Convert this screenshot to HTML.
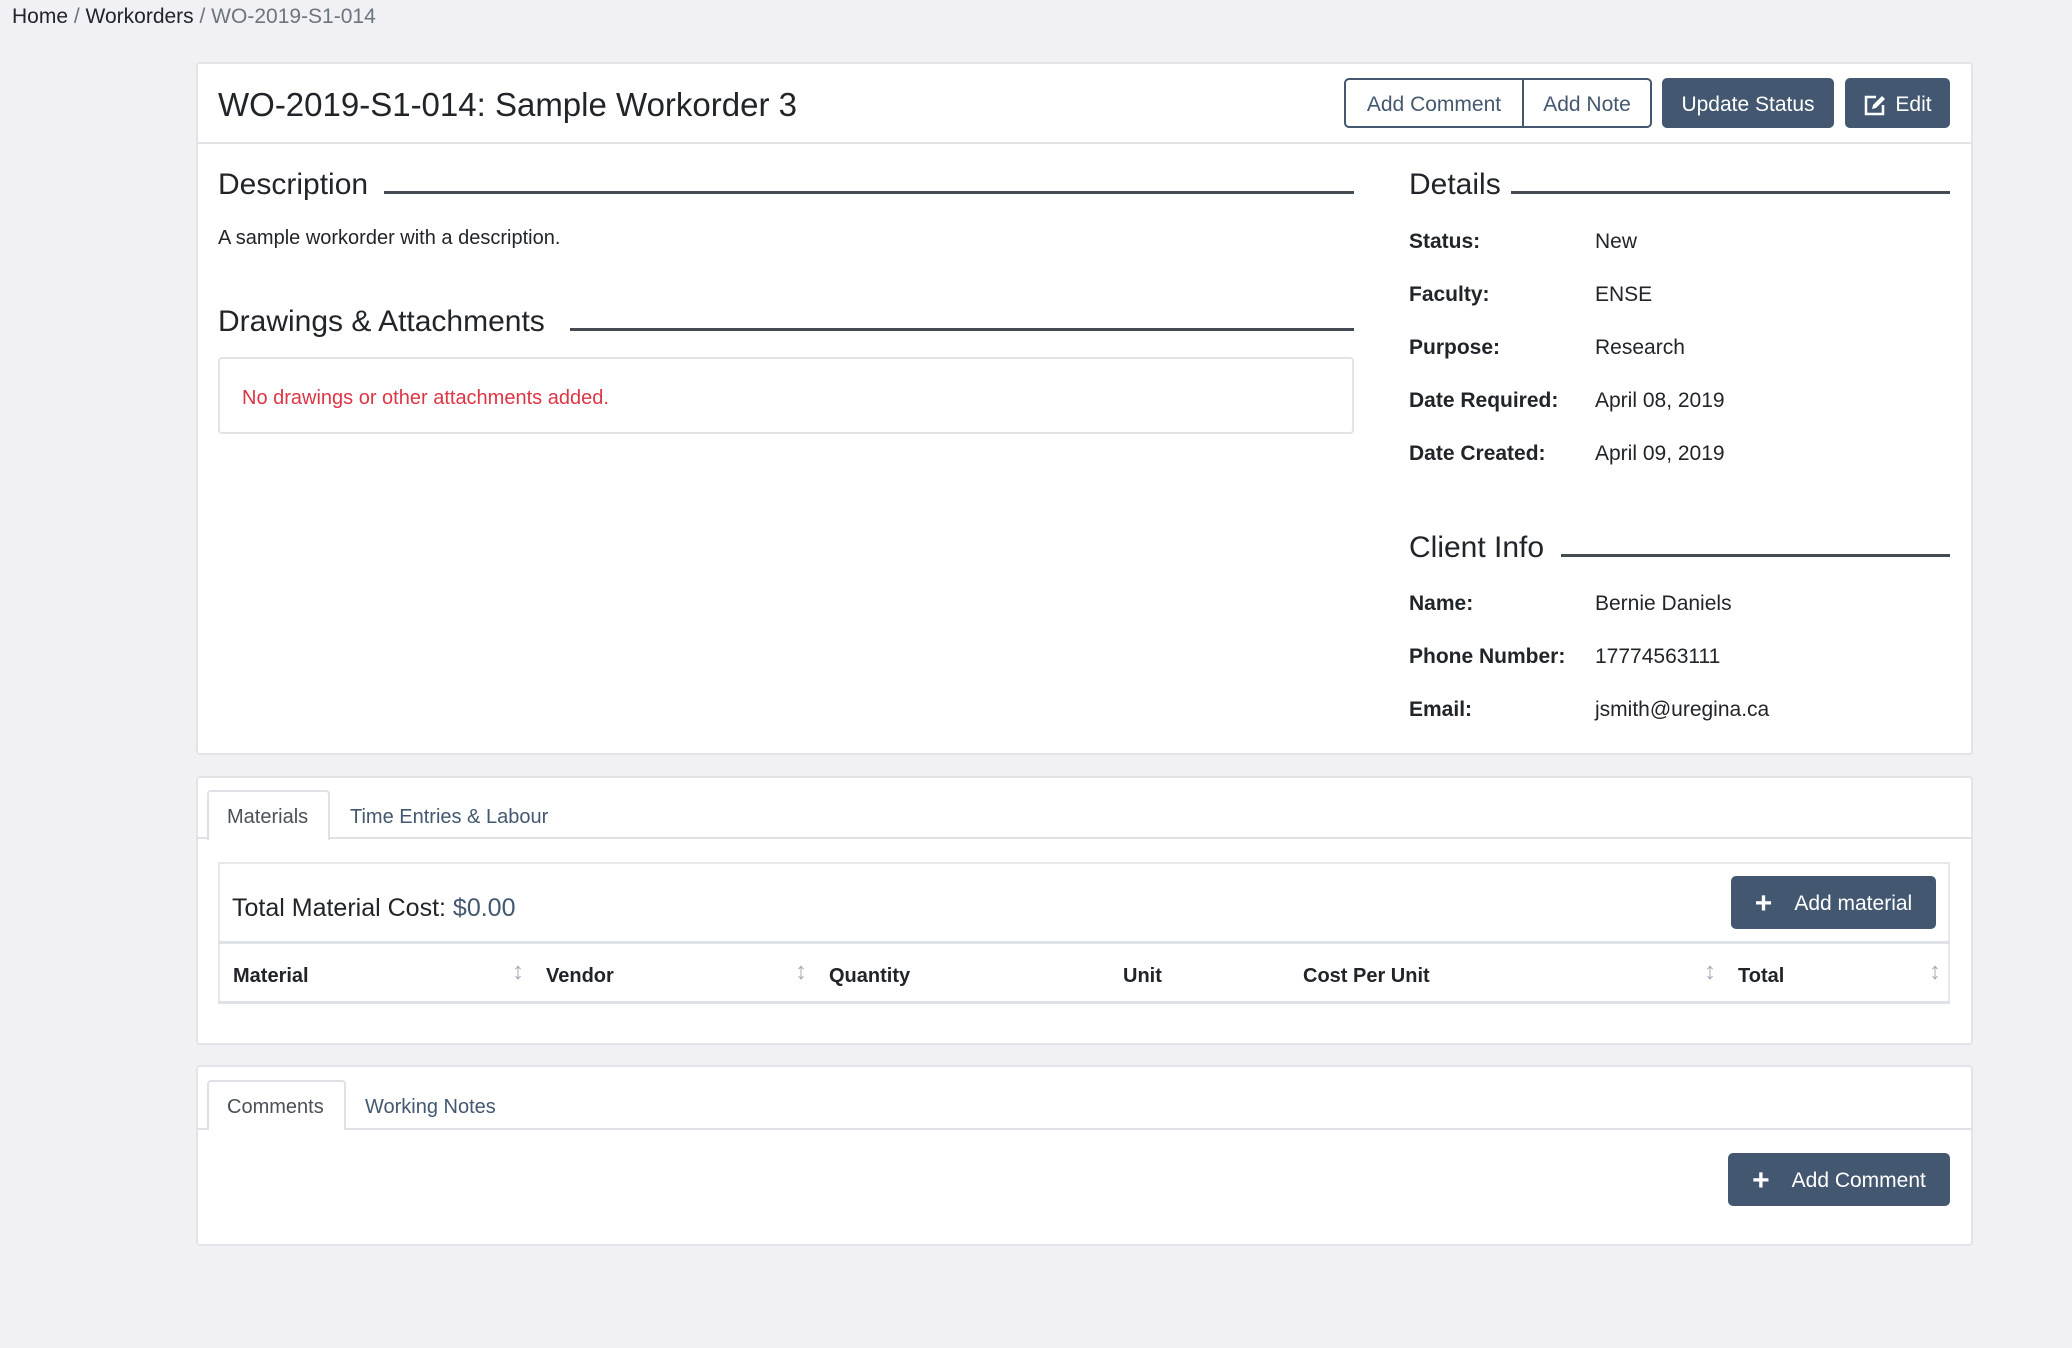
<!DOCTYPE html>
<html><head><meta charset="utf-8">
<style>
*{box-sizing:border-box;margin:0;padding:0}
body{width:2072px;height:1348px;background:#f0f0f5;font-family:"Liberation Sans",sans-serif;color:#212529;position:relative;overflow:hidden;font-size:21px}
.a{position:absolute;white-space:nowrap}
.t{transform:translateY(3px)}
.card{position:absolute;background:#fff;border:2px solid #e3e3e8;border-radius:4px}
.btn{position:absolute;background:#435870;color:#fff;border-radius:5px;font-size:21px;display:flex;align-items:center;justify-content:center;padding-top:3px}
.h{font-size:30px;font-weight:500;color:#212529}
.line{position:absolute;height:3px;background:#454b53}
.lbl{font-weight:bold}
.th{font-weight:bold;font-size:20px}
.sort{position:absolute;color:#aab;font-size:24px;top:958px}
</style></head><body>
<div class="a t" style="left:12px;top:2px;font-size:21px;color:#212529">Home <span style="color:#6c757d">/</span> Workorders <span style="color:#6c757d">/ WO-2019-S1-014</span></div>

<div class="card" style="left:196px;top:62px;width:1777px;height:693px"></div>
<div class="a" style="left:196px;top:142px;width:1777px;height:2px;background:#e3e3e8"></div>
<div class="a t" style="left:218px;top:83px;font-size:33px;font-weight:500">WO-2019-S1-014: Sample Workorder 3</div>
<div class="a" style="left:1344px;top:78px;width:308px;height:50px;border:2px solid #435870;border-radius:5px;display:flex;color:#435870;font-size:21px;padding-top:3px">
<div style="width:178px;border-right:2px solid #435870;display:flex;align-items:center;justify-content:center;margin-top:-3px;padding-top:3px">Add Comment</div>
<div style="flex:1;display:flex;align-items:center;justify-content:center">Add Note</div></div>
<div class="btn" style="left:1662px;top:78px;width:172px;height:50px">Update Status</div>
<div class="btn" style="left:1845px;top:78px;width:105px;height:50px"><svg width="24" height="22" viewBox="0 0 24 22" style="margin-right:8px"><path d="M13 3H3v17h17V11" fill="none" stroke="#fff" stroke-width="2.5"/><path d="M9 15l1-4L19 2l3 3-9 9z" fill="#fff"/></svg>Edit</div>

<div class="a h t" style="left:218px;top:165px">Description</div>
<div class="line" style="left:384px;top:191px;width:970px"></div>
<div class="a t" style="left:218px;top:224px;font-size:20px">A sample workorder with a description.</div>
<div class="a h t" style="left:218px;top:302px">Drawings &amp; Attachments</div>
<div class="line" style="left:570px;top:328px;width:784px"></div>
<div class="a" style="left:218px;top:357px;width:1136px;height:77px;border:2px solid #e3e3e8;border-radius:4px"></div>
<div class="a t" style="left:242px;top:384px;font-size:20px;color:#dc3545">No drawings or other attachments added.</div>

<div class="a h t" style="left:1409px;top:165px">Details</div>
<div class="line" style="left:1511px;top:191px;width:439px"></div>
<div class="a lbl t" style="left:1409px;top:227px">Status:</div><div class="a t" style="left:1595px;top:227px">New</div>
<div class="a lbl t" style="left:1409px;top:280px">Faculty:</div><div class="a t" style="left:1595px;top:280px">ENSE</div>
<div class="a lbl t" style="left:1409px;top:333px">Purpose:</div><div class="a t" style="left:1595px;top:333px">Research</div>
<div class="a lbl t" style="left:1409px;top:386px">Date Required:</div><div class="a t" style="left:1595px;top:386px">April 08, 2019</div>
<div class="a lbl t" style="left:1409px;top:439px">Date Created:</div><div class="a t" style="left:1595px;top:439px">April 09, 2019</div>
<div class="a h t" style="left:1409px;top:528px">Client Info</div>
<div class="line" style="left:1561px;top:554px;width:389px"></div>
<div class="a lbl t" style="left:1409px;top:589px">Name:</div><div class="a t" style="left:1595px;top:589px">Bernie Daniels</div>
<div class="a lbl t" style="left:1409px;top:642px">Phone Number:</div><div class="a t" style="left:1595px;top:642px">17774563111</div>
<div class="a lbl t" style="left:1409px;top:695px">Email:</div><div class="a t" style="left:1595px;top:695px">jsmith@uregina.ca</div>

<div class="card" style="left:196px;top:776px;width:1777px;height:269px"></div>
<div class="a" style="left:196px;top:837px;width:1777px;height:2px;background:#dee2e6"></div>
<div class="a" style="left:207px;top:790px;width:123px;height:50px;background:#fff;border:2px solid #dee2e6;border-bottom:none;border-radius:4px 4px 0 0"></div>
<div class="a t" style="left:227px;top:803px;color:#495057;font-size:20px">Materials</div>
<div class="a t" style="left:350px;top:803px;color:#435870;font-size:20px">Time Entries &amp; Labour</div>
<div class="a" style="left:218px;top:862px;width:1732px;height:142px;border:2px solid #e8e8ec"></div>
<div class="a t" style="left:232px;top:891px;font-size:25px;font-weight:500">Total Material Cost: <span style="color:#435870">$0.00</span></div>
<div class="btn" style="left:1731px;top:876px;width:205px;height:53px"><span style="font-size:30px;font-weight:bold;margin-right:22px">+</span>Add material</div>
<div class="a" style="left:218px;top:941px;width:1732px;height:3px;background:#dee2e6"></div>
<div class="a th t" style="left:233px;top:962px">Material</div>
<div class="a th t" style="left:546px;top:962px">Vendor</div>
<div class="a th t" style="left:829px;top:962px">Quantity</div>
<div class="a th t" style="left:1123px;top:962px">Unit</div>
<div class="a th t" style="left:1303px;top:962px">Cost Per Unit</div>
<div class="a th t" style="left:1738px;top:962px">Total</div>
<div class="sort" style="left:512px">↕</div>
<div class="sort" style="left:795px">↕</div>
<div class="sort" style="left:1704px">↕</div>
<div class="sort" style="left:1929px">↕</div>
<div class="a" style="left:218px;top:1001px;width:1732px;height:3px;background:#dee2e6"></div>

<div class="card" style="left:196px;top:1065px;width:1777px;height:181px"></div>
<div class="a" style="left:196px;top:1128px;width:1777px;height:2px;background:#dee2e6"></div>
<div class="a" style="left:207px;top:1080px;width:139px;height:50px;background:#fff;border:2px solid #dee2e6;border-bottom:none;border-radius:4px 4px 0 0"></div>
<div class="a t" style="left:227px;top:1093px;color:#495057;font-size:20px">Comments</div>
<div class="a t" style="left:365px;top:1093px;color:#435870;font-size:20px">Working Notes</div>
<div class="btn" style="left:1728px;top:1153px;width:222px;height:53px"><span style="font-size:30px;font-weight:bold;margin-right:22px">+</span>Add Comment</div>
</body></html>
